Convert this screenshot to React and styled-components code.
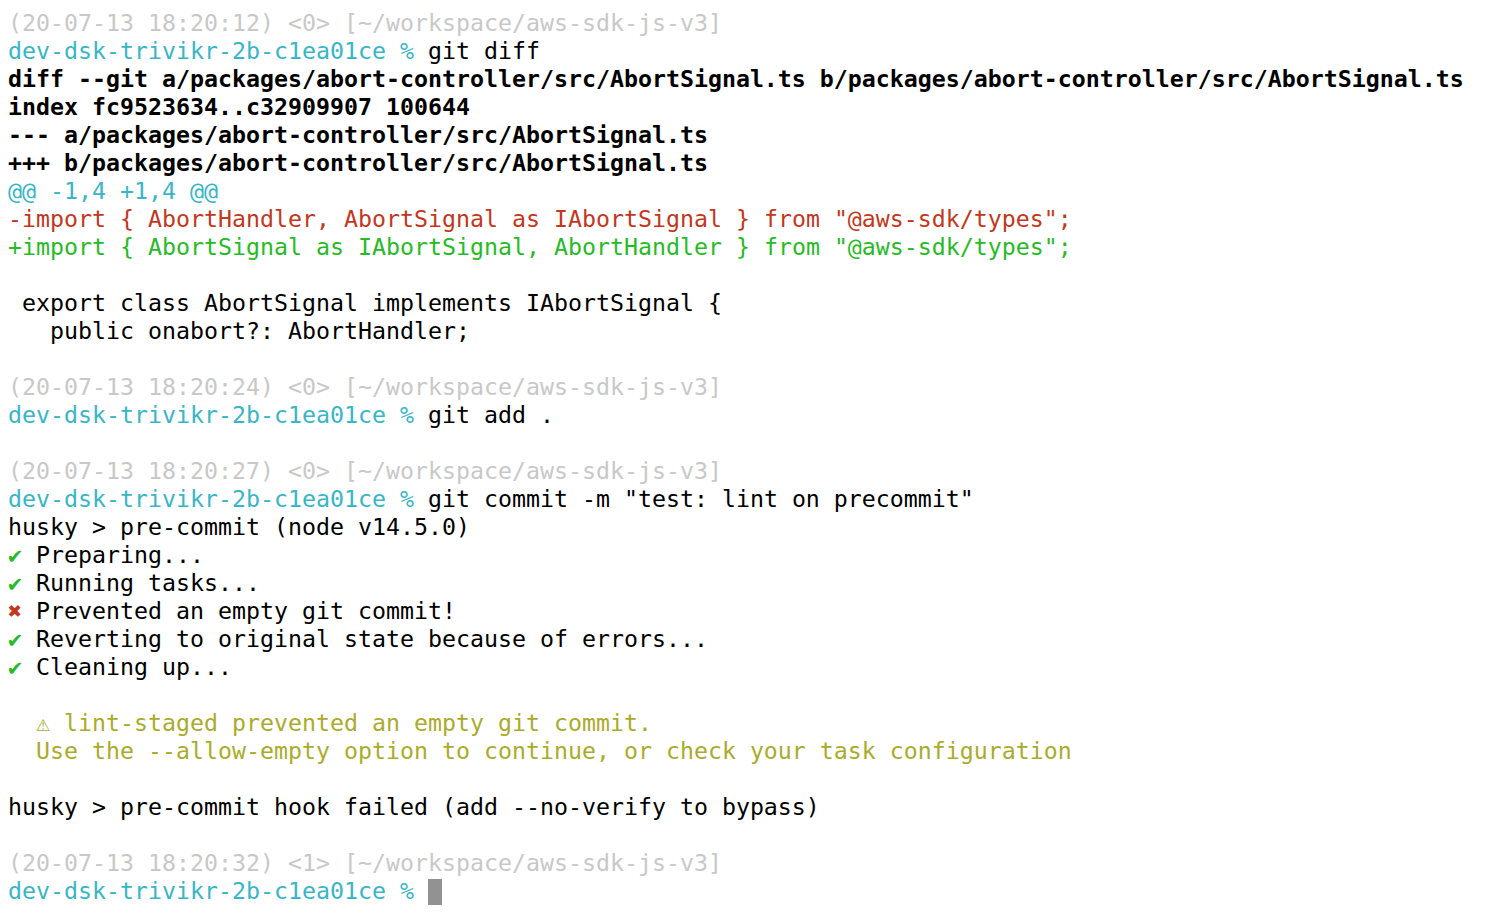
import React from 'react';
import styled, { createGlobalStyle } from 'styled-components';

const GlobalStyle = createGlobalStyle`
  html, body {
    margin: 0;
    padding: 0;
    background: #ffffff;
  }
`;

const Terminal = styled.div`
  padding: 9px 8px;
  font-family: "DejaVu Sans Mono", "Liberation Mono", monospace;
  font-size: 23.25px;
  line-height: 28px;
  color: #000;
  white-space: pre;
`;

const Line = styled.div`
  height: 28px;
  font-weight: ${props => (props.bold ? 'bold' : 'normal')};
  color: ${props => props.color || '#000'};
`;

const Span = styled.span`
  color: ${props => props.color || 'inherit'};
`;

const Cursor = styled.span`
  display: inline-block;
  width: 14px;
  height: 26px;
  background: #929292;
  vertical-align: -6px;
`;

const GRAY = '#c8c8c8';
const CYAN = '#38b6c7';
const RED = '#c33720';
const GREEN = '#26bb26';
const YELLOW = '#abab2b';

const HOST = 'dev-dsk-trivikr-2b-c1ea01ce %';

const Status = ({ time, code }) => (
  <Line color={GRAY}>{`(20-07-13 ${time}) <${code}> [~/workspace/aws-sdk-js-v3]`}</Line>
);

const Prompt = ({ children }) => (
  <Line>
    <Span color={CYAN}>{HOST}</Span> {children}
  </Line>
);

const Task = ({ ok, children }) => (
  <Line>
    <Span color={ok ? GREEN : RED}>{ok ? '✔' : '✖'}</Span> {children}
  </Line>
);

const Blank = () => <Line>{' '}</Line>;

export default function App() {
  return (
    <>
      <GlobalStyle />
      <Terminal>
        <Status time="18:20:12" code="0" />
        <Prompt>git diff</Prompt>
        <Line bold>diff --git a/packages/abort-controller/src/AbortSignal.ts b/packages/abort-controller/src/AbortSignal.ts</Line>
        <Line bold>index fc9523634..c32909907 100644</Line>
        <Line bold>--- a/packages/abort-controller/src/AbortSignal.ts</Line>
        <Line bold>+++ b/packages/abort-controller/src/AbortSignal.ts</Line>
        <Line color={CYAN}>@@ -1,4 +1,4 @@</Line>
        <Line color={RED}>-import {'{'} AbortHandler, AbortSignal as IAbortSignal {'}'} from "@aws-sdk/types";</Line>
        <Line color={GREEN}>+import {'{'} AbortSignal as IAbortSignal, AbortHandler {'}'} from "@aws-sdk/types";</Line>
        <Blank />
        <Line>{' export class AbortSignal implements IAbortSignal {'}</Line>
        <Line>{'   public onabort?: AbortHandler;'}</Line>
        <Blank />
        <Status time="18:20:24" code="0" />
        <Prompt>git add .</Prompt>
        <Blank />
        <Status time="18:20:27" code="0" />
        <Prompt>git commit -m "test: lint on precommit"</Prompt>
        <Line>husky &gt; pre-commit (node v14.5.0)</Line>
        <Task ok>Preparing...</Task>
        <Task ok>Running tasks...</Task>
        <Task>Prevented an empty git commit!</Task>
        <Task ok>Reverting to original state because of errors...</Task>
        <Task ok>Cleaning up...</Task>
        <Blank />
        <Line color={YELLOW}>{'  ⚠ lint-staged prevented an empty git commit.'}</Line>
        <Line color={YELLOW}>{'  Use the --allow-empty option to continue, or check your task configuration'}</Line>
        <Blank />
        <Line>husky &gt; pre-commit hook failed (add --no-verify to bypass)</Line>
        <Blank />
        <Status time="18:20:32" code="1" />
        <Prompt><Cursor /></Prompt>
      </Terminal>
    </>
  );
}
